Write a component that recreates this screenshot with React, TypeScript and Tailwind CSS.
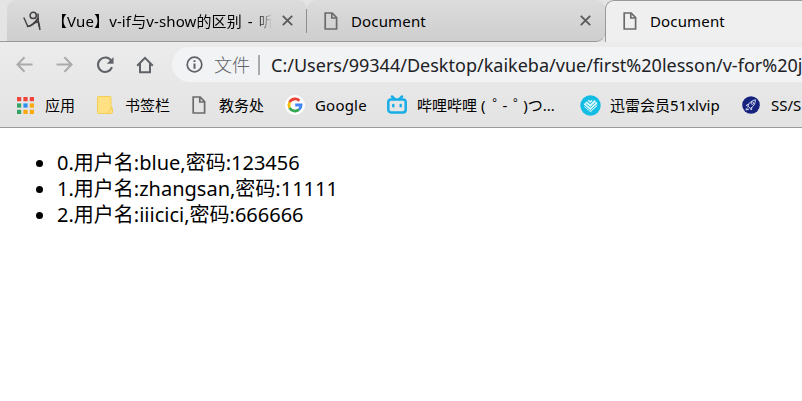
import type { ReactNode } from "react";

function Page({ className = "" }: { className?: string }) {
  return (
    <svg width="14" height="18" viewBox="0 0 14 18" fill="none" stroke="#6b6b6b" strokeWidth="1.7" className={`shrink-0 ${className}`}>
      <path d="M1.2 1H8.2L12.6 5.6V17H1.2Z" />
      <path d="M7.8 1V6H12.6" />
    </svg>
  );
}

function Close() {
  return (
    <svg width="11" height="11" viewBox="0 0 11 11" stroke="#5a5a5a" strokeWidth="1.8" className="shrink-0">
      <path d="M.8.8 10.2 10.2M10.2.8.8 10.2" />
    </svg>
  );
}

function Figure() {
  return (
    <svg width="20" height="20" viewBox="0 0 20 20" fill="none" stroke="#443f41" className="shrink-0">
      <circle cx="10.2" cy="4.4" r="3.1" strokeWidth="1.5" />
      <path d="M.8 6.5 4.8 15.5" strokeWidth="1.4" />
      <path d="M4 15.4C8 15.6 11 13.5 15.3 7" strokeWidth="1.9" />
      <path d="M15 2.5 15.2 9.5 17 19" strokeWidth="1.5" />
      <path d="M10.8 12.2 15 10.6 16.6 16" strokeWidth="1.6" />
    </svg>
  );
}

function Arrow({ flip = false }: { flip?: boolean }) {
  return (
    <svg width="17" height="17" viewBox="0 0 17 17" fill="none" stroke="#aaabac" strokeWidth="2" className={`shrink-0 ${flip ? "-scale-x-100" : ""}`}>
      <path d="M16.5 8.5H1.8M8.5 1.2 1.5 8.5 8.5 15.8" />
    </svg>
  );
}

function Apps() {
  const colors = ["#f04438", "#f04438", "#f04438", "#34a563", "#2f8fee", "#fba80d", "#34a563", "#fba80d", "#fba80d"];
  return (
    <svg width="17" height="17" viewBox="0 0 17 17" className="shrink-0">
      {colors.map((c, i) => (
        <rect key={i} x={(i % 3) * 6.4} y={Math.floor(i / 3) * 6.4} width="4.2" height="4.2" fill={c} />
      ))}
    </svg>
  );
}

function Folder() {
  return (
    <svg width="16" height="18" viewBox="0 0 16 18" fill="#ffe184" stroke="#f3ce52" className="shrink-0">
      <path d="M1.5.5H13Q14 .5 14 1.5V17.5H1.5Q.5 17.5.5 16.5V1.5Q.5.5 1.5.5Z" />
      <path d="M14 11.5Q15.5 11.5 15.5 13V16Q15.5 17.5 14 17.5H11.5V15.5Q12 14 14 14Z" />
    </svg>
  );
}

function Google() {
  return (
    <svg width="20" height="20" viewBox="0 0 20 20" fill="none" strokeWidth="2.8" className="shrink-0">
      <circle cx="10" cy="10" r="10" fill="#fff" />
      <path d="M14.4 5.8A6.1 6.1 0 0 0 4.6 7.2" stroke="#ea4335" />
      <path d="M4.6 7.2A6.1 6.1 0 0 0 4.6 12.8" stroke="#fbbc05" />
      <path d="M4.6 12.8A6.1 6.1 0 0 0 13.9 14.7" stroke="#34a853" />
      <path d="M13.9 14.7A6.1 6.1 0 0 0 16.1 10H10.2" stroke="#4285f4" />
    </svg>
  );
}

function Bilibili() {
  return (
    <svg width="20" height="20" viewBox="0 0 20 20" fill="none" stroke="#17aee5" strokeWidth="2.5" strokeLinecap="round" className="shrink-0">
      <rect x="1.3" y="4.4" width="17.4" height="13" rx="2.7" />
      <path d="M5 1.5 7.5 4M15 1.5 12.5 4" />
      <path d="M6.3 10V11.3M13.7 10V11.3" />
    </svg>
  );
}

function Thunder() {
  return (
    <svg width="21" height="21" viewBox="0 0 21 21" fill="none" className="mr-[-1px] shrink-0">
      <circle cx="10.5" cy="10.5" r="10.2" fill="#12bce2" />
      <path d="M4 9 6.8 6.2 10.2 9.3 14.4 5 17.2 7.8V11L10.4 17.3 4 11.4Z" fill="#d9f7fc" />
      <path d="M4 10.2 10.3 15.6 17.2 9.2M6 8.6 10.3 12.4 15.6 7.2" stroke="#12bce2" strokeWidth="1" />
      <path d="M8.2 5.3 10.3 7.1 12 5.3" stroke="#d9f7fc" strokeWidth="1.4" />
    </svg>
  );
}

function RocketBadge() {
  return (
    <svg width="18" height="18" viewBox="0 0 18 18" fill="none" stroke="#d4d9ef" strokeWidth="1" className="shrink-0">
      <circle cx="9" cy="9" r="8.8" fill="#15237f" stroke="none" />
      <path d="M6 10.2Q7.3 5 13.4 3.8Q13.5 9.6 8.3 12.4ZM6.5 8 4.2 9.4 5.7 10.2M9.9 11.5 9.4 14 8 12.5M5.6 11.5 3.8 14 6.9 13.2" />
      <circle cx="10.4" cy="7.2" r="1.2" />
    </svg>
  );
}

function Bookmark({ icon, children, className }: { icon: ReactNode; children: ReactNode; className: string }) {
  return (
    <div className={`flex h-full shrink-0 items-center ${className}`}>
      {icon}
      <span className="whitespace-pre">{children}</span>
    </div>
  );
}

const users = [
  { name: "blue", password: "123456" },
  { name: "zhangsan", password: "11111" },
  { name: "iiicici", password: "666666" },
];

export default function App() {
  return (
    <div className="h-[401px] w-[802px] overflow-hidden bg-white font-['Noto_Sans','Noto_Sans_CJK_SC',sans-serif] text-black">
      <header className="h-32 border-b border-[#999] bg-linear-to-b from-[#f0f0f0] to-[#e3e3e3] text-[15px] leading-5">
        <div className="flex h-[42px] bg-[#e4e4e4]">
          <div className="w-[7px] shrink-0 border-b border-[#999]" />
          <div className="flex w-[300px] shrink-0 items-center rounded-t-[9px] border-b border-[#999] bg-linear-to-b from-[#dcdcdc] to-[#cecece] pl-4">
            <Figure />
            <span className="ml-[9px] w-[220px] overflow-hidden whitespace-nowrap mask-r-from-92% mask-r-to-100% tracking-[0.12px] [word-spacing:2px]">
              【Vue】v-if与v-show的区别 - 听
            </span>
            <span className="ml-[10px]"><Close /></span>
          </div>
          <div className="flex w-[298px] shrink-0 items-center rounded-t-[9px] rounded-br-[9px] border-b border-[#999] bg-linear-to-b from-[#dcdcdc] to-[#cecece]">
            <span className="-ml-px h-6 w-px bg-[#8f8f8f]" />
            <Page className="ml-[17px]" />
            <span className="ml-[13px] w-[229px] tracking-[0.15px]">Document</span>
            <Close />
          </div>
          <div className="flex w-[197px] shrink-0 items-center rounded-tl-[9px] border-t border-l border-[#999] bg-[#efefef] pb-0.5 pl-[17px]">
            <Page />
            <span className="ml-[13px] tracking-[0.15px]">Document</span>
          </div>
        </div>

        <div className="flex h-[45px] items-center pl-4">
          <Arrow />
          <span className="ml-[23px]"><Arrow flip /></span>
          <svg width="18" height="18" viewBox="0 0 18 18" fill="none" stroke="#5f6368" strokeWidth="2.1" className="ml-[23px] shrink-0">
            <path d="M15.2 4.7A7.2 7.2 0 1 0 16 11.2" />
            <path d="M17.5 1V7.8H10.8Z" fill="#5f6368" stroke="none" />
          </svg>
          <svg width="18" height="18" viewBox="0 0 18 18" fill="none" stroke="#5f6368" strokeWidth="2" className="ml-[22px] shrink-0">
            <path d="M1.2 9.7 9 1.9 16.8 9.7M4 7.5V16.2H14V7.5" />
          </svg>
          <div className="ml-[18px] flex h-[35px] w-[650px] shrink-0 items-center rounded-l-full bg-[#f1f3f4] pl-[14px] text-lg leading-6 whitespace-nowrap">
            <svg width="17" height="17" viewBox="0 0 17 17" fill="none" stroke="#5f6368" strokeWidth="1.7" className="shrink-0">
              <circle cx="8.5" cy="8.5" r="7.3" />
              <path d="M8.5 7.5V12.7M8.5 4.3V6.1" strokeWidth="2" />
            </svg>
            <span className="ml-[11px] w-9 shrink-0 font-light text-[#5f6368]">文件</span>
            <span className="ml-2 h-5 w-0.5 shrink-0 bg-[#a9abad]" />
            <span className="ml-[11px] tracking-[0.01px] text-[#202124]">C:/Users/99344/Desktop/kaikeba/vue/first%20lesson/v-for%20j</span>
          </div>
        </div>

        <div className="flex h-9 items-center">
          <Bookmark className="ml-[17px] w-[80px] gap-[11px]" icon={<Apps />}>应用</Bookmark>
          <Bookmark className="w-[95px] gap-3" icon={<Folder />}>书签栏</Bookmark>
          <Bookmark className="w-[93px] gap-[13px]" icon={<Page />}>教务处</Bookmark>
          <Bookmark className="w-[102px] gap-[10px] tracking-[0.2px]" icon={<Google />}>Google</Bookmark>
          <Bookmark className="w-[193px] gap-[10px]" icon={<Bilibili />}>
            哔哩哔哩 (
            <span className="mr-[-5px] ml-[7px]">゜</span>-
            <span className="mr-[-5px] ml-[6px]">゜</span>)つ...
          </Bookmark>
          <Bookmark className="w-[162px] gap-[10px]" icon={<Thunder />}>迅雷会员51xlvip</Bookmark>
          <Bookmark className="gap-[11px]" icon={<RocketBadge />}>SS/S</Bookmark>
        </div>
      </header>

      <ul className="pt-[22px] pl-9 text-xl leading-[26px]">
        {users.map((user, i) => (
          <li key={user.name} className="flex items-center">
            <span className="mt-px size-[7px] rounded-full bg-black" />
            <span className="ml-[14px] whitespace-nowrap">
              {i}.用户名:{user.name},密码:{user.password}
            </span>
          </li>
        ))}
      </ul>
    </div>
  );
}
